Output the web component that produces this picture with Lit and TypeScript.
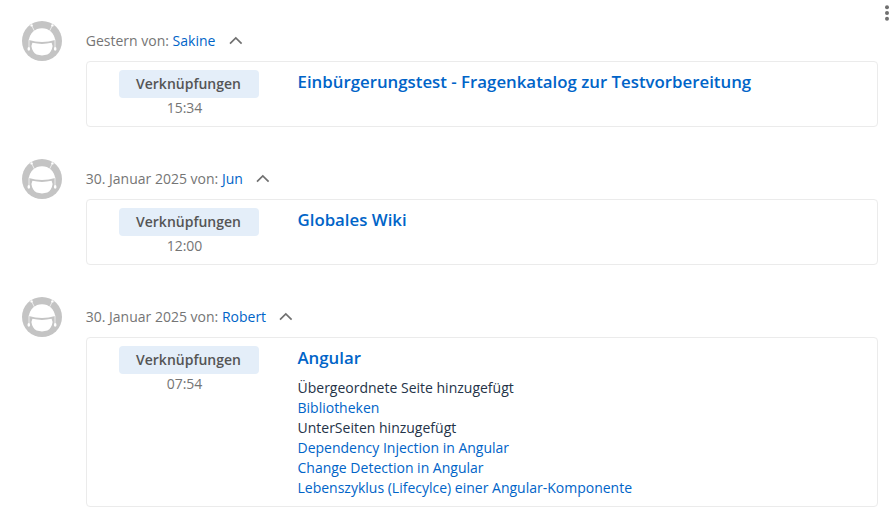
import { LitElement, html, css, nothing } from "lit";
import { customElement, property } from "lit/decorators.js";

interface Line {
  text: string;
  link?: boolean;
}

interface Activity {
  date: string;
  user: string;
  time: string;
  title: string;
  lines?: Line[];
}

const ACTIVITIES: Activity[] = [
  {
    date: "Gestern",
    user: "Sakine",
    time: "15:34",
    title: "Einbürgerungstest - Fragenkatalog zur Testvorbereitung",
  },
  { date: "30. Januar 2025", user: "Jun", time: "12:00", title: "Globales Wiki" },
  {
    date: "30. Januar 2025",
    user: "Robert",
    time: "07:54",
    title: "Angular",
    lines: [
      { text: "Übergeordnete Seite hinzugefügt" },
      { text: "Bibliotheken", link: true },
      { text: "UnterSeiten hinzugefügt" },
      { text: "Dependency Injection in Angular", link: true },
      { text: "Change Detection in Angular", link: true },
      { text: "Lebenszyklus (Lifecylce) einer Angular-Komponente", link: true },
    ],
  },
];

@customElement("user-avatar")
class UserAvatar extends LitElement {
  static styles = css`
    :host {
      display: block;
      width: 40px;
      height: 40px;
    }
    svg {
      display: block;
    }
  `;

  render() {
    return html`<svg width="40" height="40" viewBox="0 0 40 40" aria-hidden="true">
      <circle cx="20" cy="20" r="20" fill="#c4c4c4" />
      <g fill="none" stroke="#fff" stroke-linecap="round">
        <path d="M9.8 4.8 12.2 9.6M30.2 4.8 27.8 9.6" stroke-width="0.7" />
        <path d="M7 19V27M33 19V27" stroke-width="0.7" />
      </g>
      <g fill="#fff">
        <circle cx="9.6" cy="4.4" r="1.2" />
        <circle cx="30.4" cy="4.4" r="1.2" />
        <ellipse cx="6.8" cy="27.9" rx="1.3" ry="1.8" />
        <ellipse cx="33.2" cy="27.9" rx="1.3" ry="1.8" />
        <path d="M6.8 19C8 12 13 7.2 20 7.2S32 12 33.2 19Q20 22.8 6.8 19Z" />
        <path d="M10.4 21.8Q20 24 29.6 21.8L30.6 25C30 29.2 28.2 32 25.4 33.6Q20 35.2 14.6 33.6C11.8 32 10 29.2 9.4 25Z" />
      </g>
    </svg>`;
  }
}

@customElement("activity-item")
class ActivityItem extends LitElement {
  @property({ attribute: false }) activity!: Activity;

  static styles = css`
    :host {
      display: grid;
      grid-template-columns: 40px 792px;
      column-gap: 24px;
    }
    .meta {
      display: flex;
      align-items: center;
      height: 40px;
      margin-left: -0.25px;
      color: #757575;
      white-space: pre;
    }
    .link {
      color: #0064c8;
      text-decoration: none;
    }
    .chevron {
      margin: 0 0 1px 13.3px;
    }
    .card {
      grid-column: 2;
      box-sizing: border-box;
      display: grid;
      grid-template-columns: 140px 1fr;
      column-gap: 38.5px;
      padding: 8px 32px;
      min-height: 66px;
      border: 1px solid #ebebeb;
      border-radius: 4px;
    }
    .kind {
      text-align: center;
      color: #757575;
    }
    .badge {
      height: 28px;
      line-height: 28px;
      padding-right: 1px;
      border-radius: 4px;
      background: #e4eef9;
      color: #555;
      font-weight: 600;
    }
    .time {
      padding-right: 9px;
    }
    .title {
      display: block;
      font-size: 16.82px;
      line-height: 24px;
      font-weight: 600;
    }
    .lines {
      margin-top: 8px;
      color: #243348;
    }
    .line {
      display: block;
    }
  `;

  render() {
    const a = this.activity;
    return html`
      <user-avatar></user-avatar>
      <div class="meta"
        ><span>${a.date} von: </span><a class="link">${a.user}</a
        ><svg class="chevron" width="14" height="10" viewBox="0 0 14 10" aria-hidden="true">
          <path d="M1 7.6 6.8 2 12.6 7.6" fill="none" stroke="#707070" stroke-width="1.7" />
        </svg
      ></div>
      <div class="card">
        <div class="kind">
          <div class="badge">Verknüpfungen</div>
          <div class="time">${a.time}</div>
        </div>
        <div>
          <a class="link title">${a.title}</a>
          ${a.lines
            ? html`<div class="lines">
                ${a.lines.map((l) =>
                  l.link
                    ? html`<a class="line link">${l.text}</a>`
                    : html`<span class="line">${l.text}</span>`
                )}
              </div>`
            : nothing}
        </div>
      </div>
    `;
  }
}

@customElement("app-root")
class AppRoot extends LitElement {
  static styles = css`
    :host {
      display: block;
      position: relative;
      box-sizing: border-box;
      width: 894px;
      height: 524px;
      overflow: hidden;
      padding: 21px 16px 0 22px;
      background: #fff;
      font: 14px/20px "Open Sans", "Noto Sans", sans-serif;
    }
    .feed {
      display: flex;
      flex-direction: column;
      gap: 32px;
    }
    .menu {
      position: absolute;
      top: 4px;
      right: 4px;
    }
  `;

  render() {
    return html`
      <svg class="menu" width="6" height="18" viewBox="0 0 6 18" fill="#707070" aria-hidden="true">
        <circle cx="3" cy="3.3" r="2" />
        <circle cx="3" cy="9" r="2" />
        <circle cx="3" cy="14.7" r="2" />
      </svg>
      <div class="feed">
        ${ACTIVITIES.map((a) => html`<activity-item .activity=${a}></activity-item>`)}
      </div>
    `;
  }
}
